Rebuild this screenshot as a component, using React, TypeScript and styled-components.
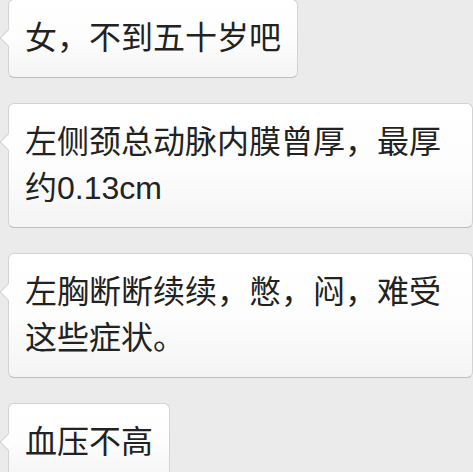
import styled, { createGlobalStyle } from 'styled-components'

const GlobalStyle = createGlobalStyle`
  html, body {
    margin: 0;
    padding: 0;
    background: #ebebeb;
    overflow: hidden;
  }
`

const Chat = styled.main`
  display: flex;
  flex-direction: column;
  align-items: flex-start;
  gap: 25px;
  margin-top: -1px;
  padding-left: 8px;
  width: 473px;
  height: 473px;
  box-sizing: border-box;
  font-family: "Liberation Sans", "Noto Sans CJK SC", sans-serif;
`

const Bubble = styled.div`
  position: relative;
  max-width: 466px;
  box-sizing: border-box;
  padding: 15px 16px 16px;
  border: 1px solid #d3d3d3;
  border-bottom-color: #bdbdbd;
  border-radius: 6px;
  background: linear-gradient(to bottom, #ffffff 0%, #fdfdfd 50%, #f4f4f4 100%);
  color: #222;
  font-size: 32px;
  line-height: 46px;
  flex-shrink: 0;

  &::before {
    content: '';
    position: absolute;
    left: -7px;
    top: 32px;
    width: 11px;
    height: 11px;
    background: #fefefe;
    border-left: 1px solid #cfcfcf;
    border-bottom: 1px solid #cfcfcf;
    transform: rotate(45deg);
  }
`

const messages = [
  '女，不到五十岁吧',
  '左侧颈总动脉内膜曾厚，最厚约0.13cm',
  '左胸断断续续，憋，闷，难受这些症状。',
  '血压不高',
]

function App() {
  return (
    <>
      <GlobalStyle />
      <Chat>
        {messages.map((m) => (
          <Bubble key={m}>{m}</Bubble>
        ))}
      </Chat>
    </>
  )
}

export default App
